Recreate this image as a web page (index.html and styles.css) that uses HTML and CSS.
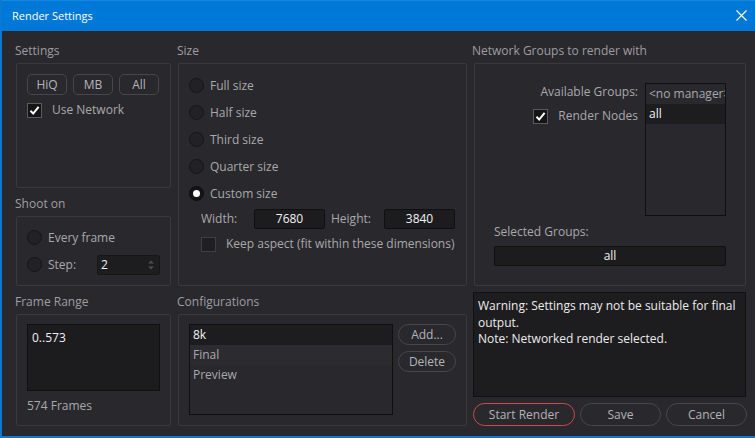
FILE: index.html
```html
<!DOCTYPE html>
<html>
<head>
<meta charset="utf-8">
<title>Render Settings</title>
<link rel="stylesheet" href="styles.css">
</head>
<body>
<div class="window">
  <div class="titlebar">
    <span class="title">Render Settings</span>
    <svg class="close" width="11" height="11" viewBox="0 0 11 11"><path d="M0.5 0.5L10.5 10.5M10.5 0.5L0.5 10.5" stroke="#ffffff" stroke-width="1.1" fill="none"/></svg>
  </div>
  <div class="content">
    <div class="col col-left">
      <div class="group">
        <div class="glabel">Settings</div>
        <div class="box box-settings">
          <div class="btnrow">
            <div class="sbtn">HiQ</div>
            <div class="sbtn">MB</div>
            <div class="sbtn">All</div>
          </div>
          <div class="check-row use-net">
            <span class="cb checked"><svg width="13" height="13" viewBox="0 0 13 13"><path d="M2.5 6.8L5.2 9.6L10.6 2.8" stroke="#ffffff" stroke-width="2" fill="none"/></svg></span>
            <span class="lbl">Use Network</span>
          </div>
        </div>
      </div>
      <div class="group gap">
        <div class="glabel">Shoot on</div>
        <div class="box box-shoot">
          <div class="radio-row"><span class="radio"></span><span class="lbl">Every frame</span></div>
          <div class="radio-row"><span class="radio"></span><span class="lbl">Step:</span>
            <div class="spin"><span class="val">2</span>
              <svg class="arrows" width="8" height="12" viewBox="0 0 8 12"><path d="M1 4.5L4 1.5L7 4.5Z M1 7.5L4 10.5L7 7.5Z" fill="#4e4e52"/></svg>
            </div>
          </div>
        </div>
      </div>
      <div class="group gap">
        <div class="glabel">Frame Range</div>
        <div class="box box-frames">
          <div class="textarea">0..573</div>
          <div class="lbl frames">574 Frames</div>
        </div>
      </div>
    </div>

    <div class="col col-mid">
      <div class="group">
        <div class="glabel">Size</div>
        <div class="box box-size">
          <div class="radio-row"><span class="radio"></span><span class="lbl">Full size</span></div>
          <div class="radio-row"><span class="radio"></span><span class="lbl">Half size</span></div>
          <div class="radio-row"><span class="radio"></span><span class="lbl">Third size</span></div>
          <div class="radio-row"><span class="radio"></span><span class="lbl">Quarter size</span></div>
          <div class="radio-row"><span class="radio on"></span><span class="lbl">Custom size</span></div>
          <div class="dims">
            <span class="lbl dlbl">Width:</span><div class="field num">7680</div>
            <span class="lbl dlbl h">Height:</span><div class="field num">3840</div>
          </div>
          <div class="check-row keep">
            <span class="cb"></span>
            <span class="lbl">Keep aspect (fit within these dimensions)</span>
          </div>
        </div>
      </div>
      <div class="group gap">
        <div class="glabel">Configurations</div>
        <div class="box box-configs">
          <div class="list cfg-list">
            <div class="item sel">8k</div>
            <div class="item alt">Final</div>
            <div class="item">Preview</div>
          </div>
          <div class="cfg-btns">
            <div class="pbtn">Add...</div>
            <div class="pbtn">Delete</div>
          </div>
        </div>
      </div>
    </div>

    <div class="col col-right">
      <div class="group">
        <div class="glabel">Network Groups to render with</div>
        <div class="box box-net">
          <div class="net-top">
            <div class="net-labels">
              <span class="lbl">Available Groups:</span>
              <div class="check-row">
                <span class="cb checked"><svg width="13" height="13" viewBox="0 0 13 13"><path d="M2.5 6.8L5.2 9.6L10.6 2.8" stroke="#ffffff" stroke-width="2" fill="none"/></svg></span>
                <span class="lbl">Render Nodes</span>
              </div>
            </div>
            <div class="list groups-list">
              <div class="item dim">&lt;no manager&gt;</div>
              <div class="item sel">all</div>
            </div>
          </div>
          <div class="lbl sel-label">Selected Groups:</div>
          <div class="field sel-field">all</div>
        </div>
      </div>
      <div class="warning">
        <div>Warning: Settings may not be suitable for final</div>
        <div>output.</div>
        <div>Note: Networked render selected.</div>
      </div>
      <div class="actions">
        <div class="pbtn start">Start Render</div>
        <div class="pbtn save">Save</div>
        <div class="pbtn cancel">Cancel</div>
      </div>
    </div>
  </div>
</div>
</body>
</html>
```

FILE: styles.css
```css
* { box-sizing: border-box; }
html, body { margin: 0; padding: 0; background: #29282d; }
body {
  font-family: "Open Sans", "Noto Sans", sans-serif;
  font-size: 12px;
  color: #a9a9ab;
}
.window {
  width: 755px;
  height: 438px;
  background: #29282d;
  border-left: 2px solid #0b78d6;
  border-bottom: 2px solid #0b78d6;
  display: flex;
  flex-direction: column;
  overflow: hidden;
}
.titlebar {
  height: 31px;
  flex: none;
  background: #0078d7;
  border-top: 1px solid #1a86dc;
  display: flex;
  align-items: center;
  justify-content: space-between;
  padding: 0 8px 1px 10px;
  margin-left: -2px;
  padding-left: 12px;
}
.title {
  color: #ffffff;
  font-size: 11px;
  line-height: 16px;
}
.close { display: block; }

.content {
  display: flex;
  padding: 12px 0 0 14px;
}
.col { display: flex; flex-direction: column; }
.col-left { width: 155px; }
.col-mid { width: 289px; margin-left: 7px; }
.col-right { width: 274px; margin-left: 6px; }

.group.gap { margin-top: 8px; }
.glabel {
  height: 16px;
  line-height: 16px;
  margin: 0 0 4px -1px;
  color: #9e9ea1;
  white-space: nowrap;
}
.box {
  border: 1px solid #3a393f;
  border-radius: 2px;
}
.lbl { color: #a9a9ab; white-space: nowrap; line-height: 16px; }

/* Settings */
.box-settings { height: 125px; padding: 10px 10px 0 10px; }
.btnrow { display: flex; gap: 6px; }
.sbtn {
  width: 40px;
  height: 21px;
  border: 1px solid #47464c;
  border-radius: 5px;
  text-align: center;
  line-height: 19px;
  color: #b4b4b6;
}
.check-row { display: flex; align-items: center; gap: 10px; }
.use-net { margin-top: 7px; }
.cb {
  width: 15px;
  height: 15px;
  flex: none;
  background: #1f1f21;
  border: 1px solid #3f3f43;
  display: flex;
  align-items: center;
  justify-content: center;
}
.cb.checked { background: #151515; border-color: #5a5a5e; }
.cb svg { display: block; }

/* radios */
.radio-row { height: 27px; display: flex; align-items: center; gap: 6px; }
.radio {
  width: 15px;
  height: 15px;
  flex: none;
  border-radius: 50%;
  background: #222224;
  border: 1px solid #161618;
  position: relative;
}
.radio.on { background: #141414; border-color: #0e0e0e; }
.radio.on::after {
  content: "";
  position: absolute;
  left: 3px;
  top: 3px;
  width: 7px;
  height: 7px;
  border-radius: 50%;
  background: #ffffff;
}

/* Shoot on */
.box-shoot { height: 70px; padding: 7px 10px 0 10px; }
.spin {
  margin-left: auto;
  width: 63px;
  height: 20px;
  background: #1d1d1f;
  border: 1px solid #171718;
  border-radius: 2px;
  display: flex;
  align-items: center;
  justify-content: space-between;
  padding: 0 4px 0 3px;
}
.val { color: #f0f0f0; line-height: 16px; }
.arrows { display: block; }

/* Frame range */
.box-frames { height: 112px; padding: 9px 10px 0 10px; }
.textarea {
  width: 133px;
  height: 67px;
  background: #1c1c1e;
  border: 1px solid #101011;
  color: #f0f0f0;
  padding: 5px 4px;
  line-height: 16px;
}
.frames { margin-top: 7px; }

/* Size */
.box-size { height: 223px; padding: 8px 10px 0 10px; }
.dims {
  display: flex;
  align-items: center;
  height: 20px;
  margin-top: 2px;
  padding-left: 12px;
}
.dlbl { width: 53px; }
.dlbl.h { margin-left: 6px; }
.field {
  background: #1c1c1e;
  border: 1px solid #101011;
  border-radius: 2px;
  color: #f2f2f2;
  text-align: center;
  line-height: 18px;
  height: 20px;
}
.num { width: 71px; }
.keep { margin-top: 7px; padding-left: 12px; }

/* Configurations */
.box-configs { height: 112px; padding: 9px 10px 0 10px; display: flex; gap: 5px; }
.list {
  border: 1px solid #0f0f10;
  background: #29282d;
}
.cfg-list { width: 204px; height: 91px; }
.item {
  height: 20px;
  line-height: 20px;
  padding-left: 3px;
  color: #a9a9ab;
  white-space: nowrap;
  overflow: hidden;
}
.item.sel { background: #1d1d1f; color: #f2f2f2; }
.item.alt { background: #2c2b30; }
.cfg-btns { display: flex; flex-direction: column; gap: 6px; }
.pbtn {
  border: 1px solid #47464c;
  border-radius: 11px;
  text-align: center;
  color: #b4b4b6;
  white-space: nowrap;
}
.cfg-btns .pbtn { width: 58px; height: 21px; line-height: 19px; }

/* Network */
.box-net {
  width: 272px;
  margin-left: 1px;
  height: 223px;
  padding: 19px 19px 0 19px;
}
.net-top { display: flex; justify-content: flex-end; gap: 7px; }
.net-labels {
  display: flex;
  flex-direction: column;
  align-items: flex-end;
  gap: 8px;
  padding-top: 1px;
}
.groups-list { width: 81px; height: 133px; }
.item.dim { color: #a9a9ab; }
.sel-label { margin-top: 8px; }
.sel-field { margin-top: 6px; width: 232px; }

/* Warning */
.warning {
  margin-top: 6px;
  width: 273px;
  height: 105px;
  background: #1d1d1f;
  border: 1px solid #111112;
  padding: 5px 4px;
  color: #ececec;
  line-height: 16.5px;
  white-space: nowrap;
}
.actions { display: flex; gap: 5px; margin-top: 6px; }
.actions .pbtn { height: 23px; line-height: 21px; border-radius: 12px; }
.start { width: 102px; border-color: #c94a4a; }
.save { width: 81px; }
.cancel { width: 81px; }
```
